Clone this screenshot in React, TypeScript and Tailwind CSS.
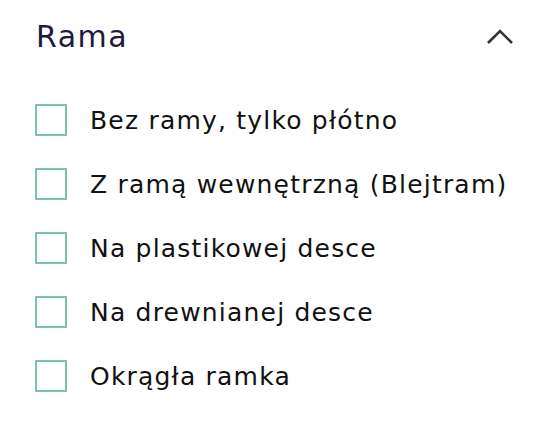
import React from "react";

const items = [
  "Bez ramy, tylko płótno",
  "Z ramą wewnętrzną (Blejtram)",
  "Na plastikowej desce",
  "Na drewnianej desce",
  "Okrągła ramka",
];

export default function App() {
  return (
    <div
      className="w-[544px] h-[442px] bg-white pl-[35px] pr-[32px] pt-[16px]"
      style={{ fontFamily: '"DejaVu Sans", sans-serif' }}
    >
      <div className="flex items-center justify-between h-[42px]">
        <h2 className="text-[30px] font-normal text-[#1e1b3b] leading-none tracking-[1.5px] ml-[1px] mt-[-1px]">
          Rama
        </h2>
        <svg width="28" height="16" viewBox="0 0 28 16" className="mr-[-2px]">
          <path d="M2 14 L14 2 L26 14" fill="none" stroke="#333" strokeWidth="2.6" />
        </svg>
      </div>
      <div className="flex flex-col gap-[32px] mt-[46px]">
        {items.map((t) => (
          <label key={t} className="flex items-center gap-[23px] h-[32px]">
            <span className="w-[32px] h-[32px] border-2 border-[#7cc2a9] shrink-0" />
            <span className="text-[25px] text-[#111] leading-none tracking-[1.2px]">{t}</span>
          </label>
        ))}
      </div>
    </div>
  );
}
